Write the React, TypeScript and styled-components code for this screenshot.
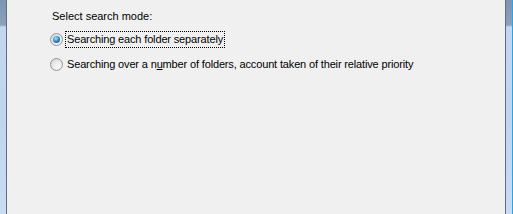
import styled, { createGlobalStyle } from "styled-components";

const Global = createGlobalStyle`
  html, body { margin: 0; padding: 0; }
  body {
    width: 513px;
    height: 214px;
    overflow: hidden;
    font-family: "Liberation Sans", Arial, sans-serif;
  }
`;

export default function App() {
  return (
    <>
      <Global />
      <Window>
        <FrameSide $side="left" />
        <Panel>
          <Caption>Select search mode:</Caption>
          <Options>
            <Option>
              <Radio $checked />
              <Label $focused>Searching each folder separately</Label>
            </Option>
            <Option>
              <Radio />
              <Label>
                Searching over a n<u>u</u>mber of folders, account taken of their relative priority
              </Label>
            </Option>
          </Options>
        </Panel>
        <FrameSide $side="right" />
      </Window>
    </>
  );
}

const Window = styled.div`
  display: flex;
  width: 513px;
  height: 214px;
`;

const FrameSide = styled.div<{ $side: "left" | "right" }>`
  width: 6px;
  background: linear-gradient(
    180deg,
    #7d93b0 0px,
    #8ba2bf 25px,
    #c3d7ef 27px,
    #bfd5f0 120px,
    #c8dcf3 100%
  );
  ${(p) =>
    p.$side === "left"
      ? "border-right: 1px solid #5f6d7d;"
      : "border-left: 1px solid #5f6d7d; border-right: 1px solid #2aa3e6;"}
`;

const Panel = styled.div`
  flex: 1;
  background: #f0f0f0;
  padding: 9px 0 0 45px;
  font-size: 11px;
  color: #000;
`;

const Caption = styled.div`
  height: 14px;
  line-height: 14px;
`;

const Options = styled.div`
  display: flex;
  flex-direction: column;
  gap: 9px;
  margin-top: 8px;
`;

const Option = styled.div`
  display: flex;
  align-items: center;
  gap: 3px;
  height: 16px;
  margin-left: -2px;
`;

const Radio = styled.span<{ $checked?: boolean }>`
  box-sizing: border-box;
  width: 13px;
  height: 13px;
  border-radius: 50%;
  border: 1px solid #979797;
  background: radial-gradient(circle at 65% 70%, #fbfbfb 0%, #e6e6e6 55%, #cfcfcf 100%);
  display: flex;
  align-items: center;
  justify-content: center;
  &::after {
    content: "";
    display: ${(p) => (p.$checked ? "block" : "none")};
    width: 7px;
    height: 7px;
    border-radius: 50%;
    background: radial-gradient(circle at 40% 35%, #b5e6ff 0%, #2d8fdc 45%, #0f3f7c 100%);
  }
`;

const Label = styled.span<{ $focused?: boolean }>`
  padding: 1px 1px;
  line-height: 13px;
  white-space: nowrap;
  letter-spacing: -0.15px;
  outline: ${(p) => (p.$focused ? "1px dotted #000" : "none")};
  u { text-decoration: underline; }
`;
